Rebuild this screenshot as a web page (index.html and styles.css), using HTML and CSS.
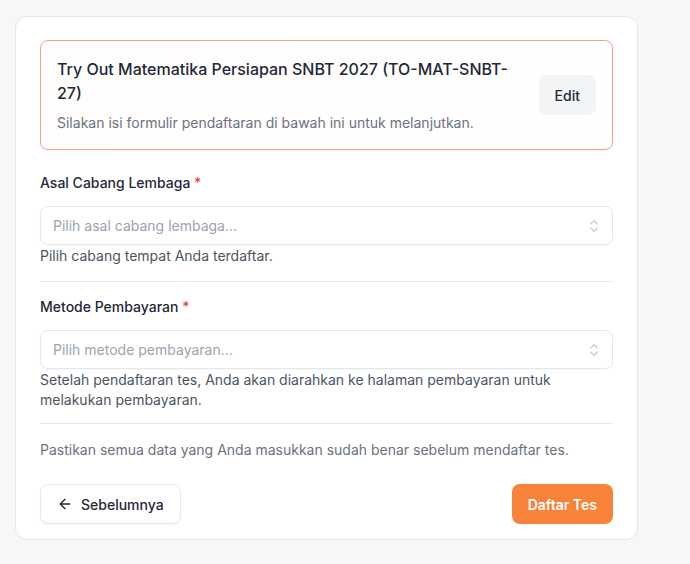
FILE: index.html
```html
<!DOCTYPE html>
<html lang="id">
<head>
<meta charset="utf-8">
<title>Daftar Tes</title>
<link rel="stylesheet" href="styles.css">
</head>
<body>
<div class="card">
  <div class="summary">
    <div class="summary-text">
      <div class="summary-title">Try Out Matematika Persiapan SNBT 2027 (TO-MAT-SNBT-27)</div>
      <div class="summary-desc">Silakan isi formulir pendaftaran di bawah ini untuk melanjutkan.</div>
    </div>
    <button class="btn-edit">Edit</button>
  </div>

  <div class="field field-first">
    <div class="label">Asal Cabang Lembaga <span class="req">*</span></div>
    <div class="select">
      <span class="placeholder">Pilih asal cabang lembaga...</span>
      <svg class="chev" width="16" height="16" viewBox="0 0 24 24" fill="none" stroke="currentColor" stroke-width="2" stroke-linecap="round" stroke-linejoin="round"><path d="m7 15 5 5 5-5"/><path d="m7 9 5-5 5 5"/></svg>
    </div>
    <div class="helper">Pilih cabang tempat Anda terdaftar.</div>
  </div>

  <div class="divider div-1"></div>

  <div class="field field-second">
    <div class="label">Metode Pembayaran <span class="req">*</span></div>
    <div class="select">
      <span class="placeholder">Pilih metode pembayaran...</span>
      <svg class="chev" width="16" height="16" viewBox="0 0 24 24" fill="none" stroke="currentColor" stroke-width="2" stroke-linecap="round" stroke-linejoin="round"><path d="m7 15 5 5 5-5"/><path d="m7 9 5-5 5 5"/></svg>
    </div>
    <div class="helper">Setelah pendaftaran tes, Anda akan diarahkan ke halaman pembayaran untuk melakukan pembayaran.</div>
  </div>

  <div class="divider div-2"></div>

  <p class="note">Pastikan semua data yang Anda masukkan sudah benar sebelum mendaftar tes.</p>

  <div class="actions">
    <button class="btn-back">
      <svg width="16" height="16" viewBox="0 0 24 24" fill="none" stroke="currentColor" stroke-width="2" stroke-linecap="round" stroke-linejoin="round"><path d="m12 19-7-7 7-7"/><path d="M19 12H5"/></svg>
      <span>Sebelumnya</span>
    </button>
    <button class="btn-primary">Daftar Tes</button>
  </div>
</div>
</body>
</html>
```

FILE: styles.css
```css
* { box-sizing: border-box; }
html, body { margin: 0; }
body {
  background: #f7f7f8;
  font-family: Inter, "Noto Sans", "Liberation Sans", sans-serif;
  color: #111827;
  padding: 16px 0 0 15px;
}
.card {
  width: 623px;
  background: #ffffff;
  border: 1px solid #e5e7eb;
  border-radius: 12px;
  padding: 23px 24px 15px 24px;
}
.summary {
  display: flex;
  align-items: center;
  gap: 16px;
  border: 1px solid #f4a287;
  border-radius: 8px;
  padding: 16px;
  background: linear-gradient(90deg, #fffdfc, #ffffff);
  box-shadow: 0 1px 2px rgba(0,0,0,0.05);
}
.summary-text { flex: 1; }
.summary-title {
  font-size: 16px;
  line-height: 24px;
  font-weight: 450;
  color: #1f2937;
  padding-right: 14px;
}
.summary-desc {
  margin-top: 8px;
  font-size: 14px;
  line-height: 20px;
  color: #6b7280;
}
.btn-edit {
  font-family: inherit;
  font-size: 14px;
  font-weight: 450;
  color: #1f2937;
  background: #f3f4f6;
  border: none;
  border-radius: 8px;
  height: 40px;
  padding: 0 16px;
}
.field-first { margin-top: 23px; }
.field-second { margin-top: 15px; }
.label {
  font-size: 14px;
  line-height: 20px;
  font-weight: 500;
  color: #1f2937;
}
.req { color: #ef4444; }
.select {
  margin-top: 13px;
  height: 39px;
  border: 1px solid #e5e7eb;
  border-radius: 8px;
  display: flex;
  align-items: center;
  justify-content: space-between;
  padding: 0 10px 0 12px;
  box-shadow: 0 1px 2px rgba(0,0,0,0.04);
}
.placeholder {
  font-size: 14px;
  color: #9ca3af;
}
.chev { color: #c9cdd3; }
.helper {
  font-size: 14px;
  line-height: 20px;
  color: #4b5563;
  margin-top: 1px;
}
.divider {
  height: 1px;
  background: #e5e7eb;
}
.div-1 { margin-top: 15px; }
.div-2 { margin-top: 13px; }
.note {
  margin: 16px 0 0 0;
  font-size: 14px;
  line-height: 20px;
  color: #6b7280;
}
.actions {
  margin-top: 24px;
  display: flex;
  justify-content: space-between;
  align-items: center;
}
.btn-back {
  font-family: inherit;
  display: flex;
  align-items: center;
  gap: 8px;
  height: 40px;
  padding: 0 16px;
  font-size: 14px;
  font-weight: 450;
  color: #1f2937;
  background: #ffffff;
  border: 1px solid #e5e7eb;
  border-radius: 8px;
  box-shadow: 0 1px 2px rgba(0,0,0,0.05);
}
.btn-primary {
  font-family: inherit;
  height: 40px;
  padding: 0 16px;
  font-size: 14px;
  font-weight: 600;
  color: #ffffff;
  background: #f7823a;
  border: none;
  border-radius: 8px;
}
```
